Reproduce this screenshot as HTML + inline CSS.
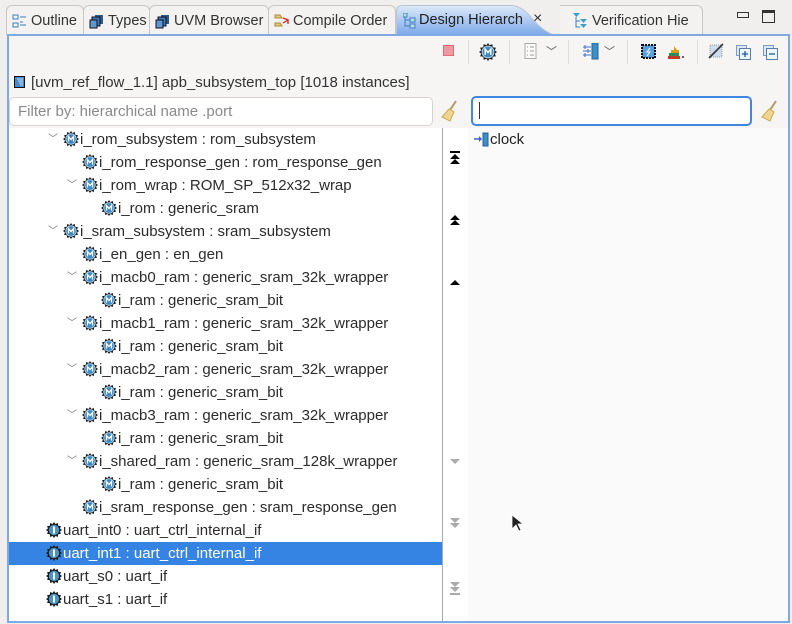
<!DOCTYPE html>
<html><head><meta charset="utf-8">
<style>
*{margin:0;padding:0;box-sizing:border-box}
body{width:792px;height:624px;background:#f0efee;font-family:"Liberation Sans",sans-serif;font-size:14px;color:#2e2e2e;position:relative;overflow:hidden}
.a{position:absolute}
.tab{position:absolute;top:5px;height:30px;background:#f3f2f1;border:1px solid #c9c7c4;border-bottom:none;border-radius:6px 6px 0 0;font-size:14.5px;line-height:30px;padding-left:24px;color:#333}
.tab svg{position:absolute;left:5px;top:8px}
.row{position:absolute;height:23px;line-height:23px;white-space:nowrap;font-size:15px;color:#2b2b2b}
.row svg.ic{position:absolute;top:3px;left:0}
.row span{position:absolute;left:17px;top:0}
.arr{position:absolute;top:0;font-size:10px;color:#777}
</style></head><body>
<svg width="0" height="0" style="position:absolute">
<defs>
<symbol id="chip" viewBox="0 0 16 16">
<path d="M8 0 L9.4 2 L11.8 1 L12.2 3.8 L15 4.2 L14 6.5 L16 8 L14 9.5 L15 11.8 L12.2 12.2 L11.8 15 L9.4 14 L8 16 L6.6 14 L4.2 15 L3.8 12.2 L1 11.8 L2 9.5 L0 8 L2 6.5 L1 4.2 L3.8 3.8 L4.2 1 L6.6 2Z" fill="#1a1a1a"/>
<circle cx="8" cy="8" r="5.2" fill="#3d86c0"/>
<circle cx="8" cy="8" r="5.2" fill="none" stroke="#a8d4ee" stroke-width="1"/>
<path d="M5.5 10.5V5.5L8 8.5L10.5 5.5V10.5" stroke="#fff" stroke-width="1.3" fill="none"/>
</symbol>
<symbol id="chipi" viewBox="0 0 16 16">
<path d="M8 0 L9.4 2 L11.8 1 L12.2 3.8 L15 4.2 L14 6.5 L16 8 L14 9.5 L15 11.8 L12.2 12.2 L11.8 15 L9.4 14 L8 16 L6.6 14 L4.2 15 L3.8 12.2 L1 11.8 L2 9.5 L0 8 L2 6.5 L1 4.2 L3.8 3.8 L4.2 1 L6.6 2Z" fill="#1a1a1a"/>
<circle cx="8" cy="8" r="5.2" fill="#4a94c8"/>
<path d="M8 4.5V11.5" stroke="#fff" stroke-width="2"/>
</symbol>
</defs></svg>

<div class="tab" style="left:6px;width:78px"><svg width="16" height="16"><rect x="1" y="1" width="5" height="4" fill="none" stroke="#3d7fc4"/><rect x="1" y="9" width="5" height="4" fill="none" stroke="#3d7fc4"/><path d="M8 3h6M8 8h3M8 11h6" stroke="#3d7fc4"/></svg>Outline</div>
<div class="tab" style="left:83px;width:67px"><svg width="16" height="16"><rect x="6" y="1" width="8" height="9" fill="#2d5b8a"/><rect x="3" y="3" width="8" height="9" fill="#3f77b0" stroke="#112"/><rect x="1" y="6" width="7" height="8" fill="#5d97cf" stroke="#112"/></svg>Types</div>
<div class="tab" style="left:149px;width:120px"><svg width="16" height="16"><rect x="6" y="1" width="8" height="9" fill="#2d5b8a"/><rect x="3" y="3" width="8" height="9" fill="#3f77b0" stroke="#112"/><rect x="1" y="6" width="7" height="8" fill="#5d97cf" stroke="#112"/></svg>UVM Browser</div>
<div class="tab" style="left:268px;width:128px"><svg width="18" height="16"><path d="M1 1h5l2 3H1z M1 9h5l2 3H1z" fill="#e8c77a" stroke="#b08a30"/><path d="M9 4l5 2-5 3M14 6v4" stroke="#d22" fill="none" stroke-width="1.3"/></svg>Compile Order</div>
<svg class="a" style="left:396px;top:5px" width="166" height="31"><defs><linearGradient id="g" x1="0" y1="0" x2="0" y2="1"><stop offset="0" stop-color="#dce9f9"/><stop offset="1" stop-color="#79a6e8"/></linearGradient></defs><path d="M0.5 31V6Q0.5 0.5 6 0.5H115Q125 0.5 135 12Q150 31 166 31Z" fill="url(#g)" stroke="#b9c6d6"/></svg>
<svg class="a" style="left:403px;top:13px" width="14" height="16"><rect x="0" y="0" width="4" height="4" fill="#bdd" stroke="#3d7fc4"/><rect x="7" y="5" width="5" height="4" fill="#bdd" stroke="#3d7fc4"/><rect x="7" y="11" width="5" height="4" fill="#bdd" stroke="#3d7fc4"/><path d="M2 4v9h5M2 7h5" stroke="#3d7fc4" fill="none"/></svg>
<div class="a" style="left:419px;top:12px;font-size:14.5px;color:#222">Design Hierarch</div>
<div class="a" style="left:533px;top:10px;font-size:16px;color:#333">×</div>
<div class="tab" style="left:560px;width:143px;border-left:none;border-radius:0 6px 0 0;padding-left:32px"><svg width="16" height="18" style="left:12px;top:6px"><path d="M1 1h7l-3.5 4z" fill="#3aa0c8"/><path d="M4 5v10h4M4 9h4" stroke="#3d7fc4" fill="none"/><path d="M8 7h7l-3.5 4zM8 12h7l-3.5 4z" fill="#3aa0c8"/></svg>Verification Hie</div>
<div class="a" style="left:737px;top:12px;width:12px;height:6px;border:1.5px solid #333"></div>
<div class="a" style="left:762px;top:10px;width:13px;height:13px;border:1.5px solid #333;border-top-width:3px"></div>

<div class="a" style="left:7px;top:34px;width:783px;height:589px;background:#f6f5f4;border:2px solid #7fa9e3"></div>

<div class="a" style="left:443px;top:45px;width:11px;height:11px;background:#ec9aa0;border:1px solid #e06d77"></div>
<div class="a" style="left:468px;top:40px;width:1px;height:24px;background:#ddd"></div>
<svg class="a" style="left:479px;top:43px" width="18" height="18" viewBox="0 0 16 16"><use href="#chip"/></svg>
<div class="a" style="left:509px;top:40px;width:1px;height:24px;background:#ddd"></div>
<svg class="a" style="left:524px;top:43px" width="14" height="17"><rect x="1" y="0.5" width="11" height="15" fill="#fafafa" stroke="#aaa"/><path d="M3 4h1M6 4h4M3 8h1M6 8h4M3 12h1M6 12h4" stroke="#999"/></svg>
<div class="a" style="left:546px;top:43px;color:#555;font-size:11px">﹀</div>
<div class="a" style="left:568px;top:40px;width:1px;height:24px;background:#ddd"></div>
<svg class="a" style="left:583px;top:43px" width="16" height="17"><path d="M0 4h8M0 8h8M0 12h8M2 2v4M5 6v4M2 10v4" stroke="#3d6fc4"/><rect x="9" y="0" width="6" height="16" fill="#3a8fc4" stroke="#2560a0"/></svg>
<div class="a" style="left:604px;top:43px;color:#555;font-size:11px">﹀</div>
<div class="a" style="left:627px;top:40px;width:1px;height:24px;background:#ddd"></div>
<svg class="a" style="left:641px;top:44px" width="15" height="15"><rect x="1" y="1" width="13" height="13" fill="#5aa0e0" stroke="#111" stroke-width="2" stroke-dasharray="2 1"/><path d="M9 4l-3 4h3l-3 4" stroke="#fff" fill="none"/></svg>
<svg class="a" style="left:666px;top:45px" width="20" height="14"><path d="M2 11h12v3H2z" fill="#c0392b"/><path d="M3 8h10v3H3z" fill="#2e8b57"/><path d="M5 5h8v3H5z" fill="#d4a017"/><path d="M8 1l3 4H8z" fill="#d4a017"/><circle cx="17" cy="12" r="1" fill="#333"/></svg>
<div class="a" style="left:697px;top:40px;width:1px;height:24px;background:#ddd"></div>
<svg class="a" style="left:708px;top:43px" width="16" height="16"><rect x="2" y="2" width="12" height="12" fill="#cde" stroke="#999" stroke-dasharray="1 1"/><path d="M1 15L15 1" stroke="#333" stroke-width="1.6"/></svg>
<svg class="a" style="left:736px;top:45px" width="15" height="15"><rect x="0.5" y="0.5" width="10" height="10" fill="#dde8f4" stroke="#7a9cc0"/><rect x="3.5" y="3.5" width="11" height="11" fill="#eef4fb" stroke="#5a7fa6"/><path d="M6 9h6M9 6v6" stroke="#1a5a9a" stroke-width="1.3"/></svg>
<svg class="a" style="left:763px;top:45px" width="15" height="15"><rect x="0.5" y="0.5" width="10" height="10" fill="#dde8f4" stroke="#7a9cc0"/><rect x="3.5" y="3.5" width="11" height="11" fill="#eef4fb" stroke="#5a7fa6"/><path d="M6 9h6" stroke="#1a5a9a" stroke-width="1.3"/></svg>

<svg class="a" style="left:14px;top:76px" width="11" height="12"><rect x="0.5" y="0.5" width="10" height="11" fill="#4a8ac8" stroke="#111"/><path d="M3 3h6M4 5h5M5 7h4M6 9h3" stroke="#cde"/></svg>
<div class="a" style="left:31px;top:74px;font-size:15px;color:#333">[uvm_ref_flow_1.1] apb_subsystem_top [1018 instances]</div>

<div class="a" style="left:9px;top:97px;width:424px;height:29px;background:#fff;border:1px solid #d6d3cf;border-radius:5px;padding:5px 8px;color:#8a8a8a;font-size:15px">Filter by: hierarchical name .port</div>
<svg class="a" style="left:441px;top:100px" width="18" height="22"><path d="M15 1l-6 9" stroke="#b89a60" stroke-width="2"/><path d="M8 9l5 3-4 9-8-4z" fill="#f0d690" stroke="#c8a850"/></svg>
<div class="a" style="left:471px;top:96px;width:281px;height:30px;background:#fff;border:2px solid #3f87e0;border-radius:5px"></div>
<div class="a" style="left:479px;top:102px;width:1px;height:17px;background:#333"></div>
<svg class="a" style="left:761px;top:100px" width="18" height="22"><path d="M15 1l-6 9" stroke="#b89a60" stroke-width="2"/><path d="M8 9l5 3-4 9-8-4z" fill="#f0d690" stroke="#c8a850"/></svg>

<div class="a" style="left:9px;top:128px;width:433px;height:493px;background:#fff"></div>
<div class="a" style="left:442px;top:128px;width:1px;height:493px;background:#aaa"></div>
<div class="a" style="left:443px;top:128px;width:25px;height:493px;background:#fff"></div>
<div class="a" style="left:468px;top:128px;width:320px;height:493px;background:#fafafa"></div>

<svg class="a" style="left:449px;top:151px" width="12" height="14"><path d="M1 1h10" stroke="#000" stroke-width="2"/><path d="M6 3l5 5H1z M6 8l5 5H1z" fill="#000"/></svg>
<svg class="a" style="left:449px;top:215px" width="12" height="12"><path d="M6 0l5 5H1z M6 5l5 5H1z" fill="#000"/></svg>
<svg class="a" style="left:449px;top:279px" width="12" height="8"><path d="M6 1l5 5H1z" fill="#000"/></svg>
<svg class="a" style="left:449px;top:457px" width="12" height="8"><path d="M6 7l5-5H1z" fill="#aaa"/></svg>
<svg class="a" style="left:449px;top:518px" width="12" height="12"><path d="M6 5l5-5H1z M6 10l5-5H1z" fill="#aaa"/></svg>
<svg class="a" style="left:449px;top:582px" width="12" height="14"><path d="M6 5l5-5H1z M6 10l5-5H1z" fill="#aaa"/><path d="M1 12h10" stroke="#aaa" stroke-width="2"/></svg>

<svg class="a" style="left:474px;top:132px" width="16" height="15"><path d="M0 7h5" stroke="#3d5fc4" stroke-width="1.5"/><path d="M5 4l3 3-3 3z" fill="#3d5fc4"/><rect x="9" y="1" width="5" height="13" fill="#3a90c8" stroke="#245f9a"/></svg>
<div class="a" style="left:490px;top:131px;font-size:15px;color:#222">clock</div>

<svg class="a" style="left:511px;top:514px" width="12" height="18"><path d="M1 1v14l4-4 3 6 2-1-3-6h5z" fill="#222" stroke="#fff" stroke-width="0.8"/></svg>

<div class="row" style="left:48px;top:128px"><span class="arr" style="left:0">﹀</span></div>
<div class="row" style="left:63px;top:128px"><svg class="ic" width="16" height="16"><use href="#chip"/></svg><span>i_rom_subsystem : rom_subsystem</span></div>
<div class="row" style="left:82px;top:151px"><svg class="ic" width="16" height="16"><use href="#chip"/></svg><span>i_rom_response_gen : rom_response_gen</span></div>
<div class="row" style="left:67px;top:174px"><span class="arr" style="left:0">﹀</span></div>
<div class="row" style="left:82px;top:174px"><svg class="ic" width="16" height="16"><use href="#chip"/></svg><span>i_rom_wrap : ROM_SP_512x32_wrap</span></div>
<div class="row" style="left:101px;top:197px"><svg class="ic" width="16" height="16"><use href="#chip"/></svg><span>i_rom : generic_sram</span></div>
<div class="row" style="left:48px;top:220px"><span class="arr" style="left:0">﹀</span></div>
<div class="row" style="left:63px;top:220px"><svg class="ic" width="16" height="16"><use href="#chip"/></svg><span>i_sram_subsystem : sram_subsystem</span></div>
<div class="row" style="left:82px;top:243px"><svg class="ic" width="16" height="16"><use href="#chip"/></svg><span>i_en_gen : en_gen</span></div>
<div class="row" style="left:67px;top:266px"><span class="arr" style="left:0">﹀</span></div>
<div class="row" style="left:82px;top:266px"><svg class="ic" width="16" height="16"><use href="#chip"/></svg><span>i_macb0_ram : generic_sram_32k_wrapper</span></div>
<div class="row" style="left:101px;top:289px"><svg class="ic" width="16" height="16"><use href="#chip"/></svg><span>i_ram : generic_sram_bit</span></div>
<div class="row" style="left:67px;top:312px"><span class="arr" style="left:0">﹀</span></div>
<div class="row" style="left:82px;top:312px"><svg class="ic" width="16" height="16"><use href="#chip"/></svg><span>i_macb1_ram : generic_sram_32k_wrapper</span></div>
<div class="row" style="left:101px;top:335px"><svg class="ic" width="16" height="16"><use href="#chip"/></svg><span>i_ram : generic_sram_bit</span></div>
<div class="row" style="left:67px;top:358px"><span class="arr" style="left:0">﹀</span></div>
<div class="row" style="left:82px;top:358px"><svg class="ic" width="16" height="16"><use href="#chip"/></svg><span>i_macb2_ram : generic_sram_32k_wrapper</span></div>
<div class="row" style="left:101px;top:381px"><svg class="ic" width="16" height="16"><use href="#chip"/></svg><span>i_ram : generic_sram_bit</span></div>
<div class="row" style="left:67px;top:404px"><span class="arr" style="left:0">﹀</span></div>
<div class="row" style="left:82px;top:404px"><svg class="ic" width="16" height="16"><use href="#chip"/></svg><span>i_macb3_ram : generic_sram_32k_wrapper</span></div>
<div class="row" style="left:101px;top:427px"><svg class="ic" width="16" height="16"><use href="#chip"/></svg><span>i_ram : generic_sram_bit</span></div>
<div class="row" style="left:67px;top:450px"><span class="arr" style="left:0">﹀</span></div>
<div class="row" style="left:82px;top:450px"><svg class="ic" width="16" height="16"><use href="#chip"/></svg><span>i_shared_ram : generic_sram_128k_wrapper</span></div>
<div class="row" style="left:101px;top:473px"><svg class="ic" width="16" height="16"><use href="#chip"/></svg><span>i_ram : generic_sram_bit</span></div>
<div class="row" style="left:82px;top:496px"><svg class="ic" width="16" height="16"><use href="#chip"/></svg><span>i_sram_response_gen : sram_response_gen</span></div>
<div class="row" style="left:46px;top:519px"><svg class="ic" width="16" height="16"><use href="#chipi"/></svg><span>uart_int0 : uart_ctrl_internal_if</span></div>
<div class="a" style="left:9px;top:542px;width:433px;height:23px;background:#3584e4"></div>
<div class="row" style="left:46px;top:542px;color:#fff"><svg class="ic" width="16" height="16"><use href="#chipi"/></svg><span>uart_int1 : uart_ctrl_internal_if</span></div>
<div class="row" style="left:46px;top:565px"><svg class="ic" width="16" height="16"><use href="#chipi"/></svg><span>uart_s0 : uart_if</span></div>
<div class="row" style="left:46px;top:588px"><svg class="ic" width="16" height="16"><use href="#chipi"/></svg><span>uart_s1 : uart_if</span></div>
</body></html>
